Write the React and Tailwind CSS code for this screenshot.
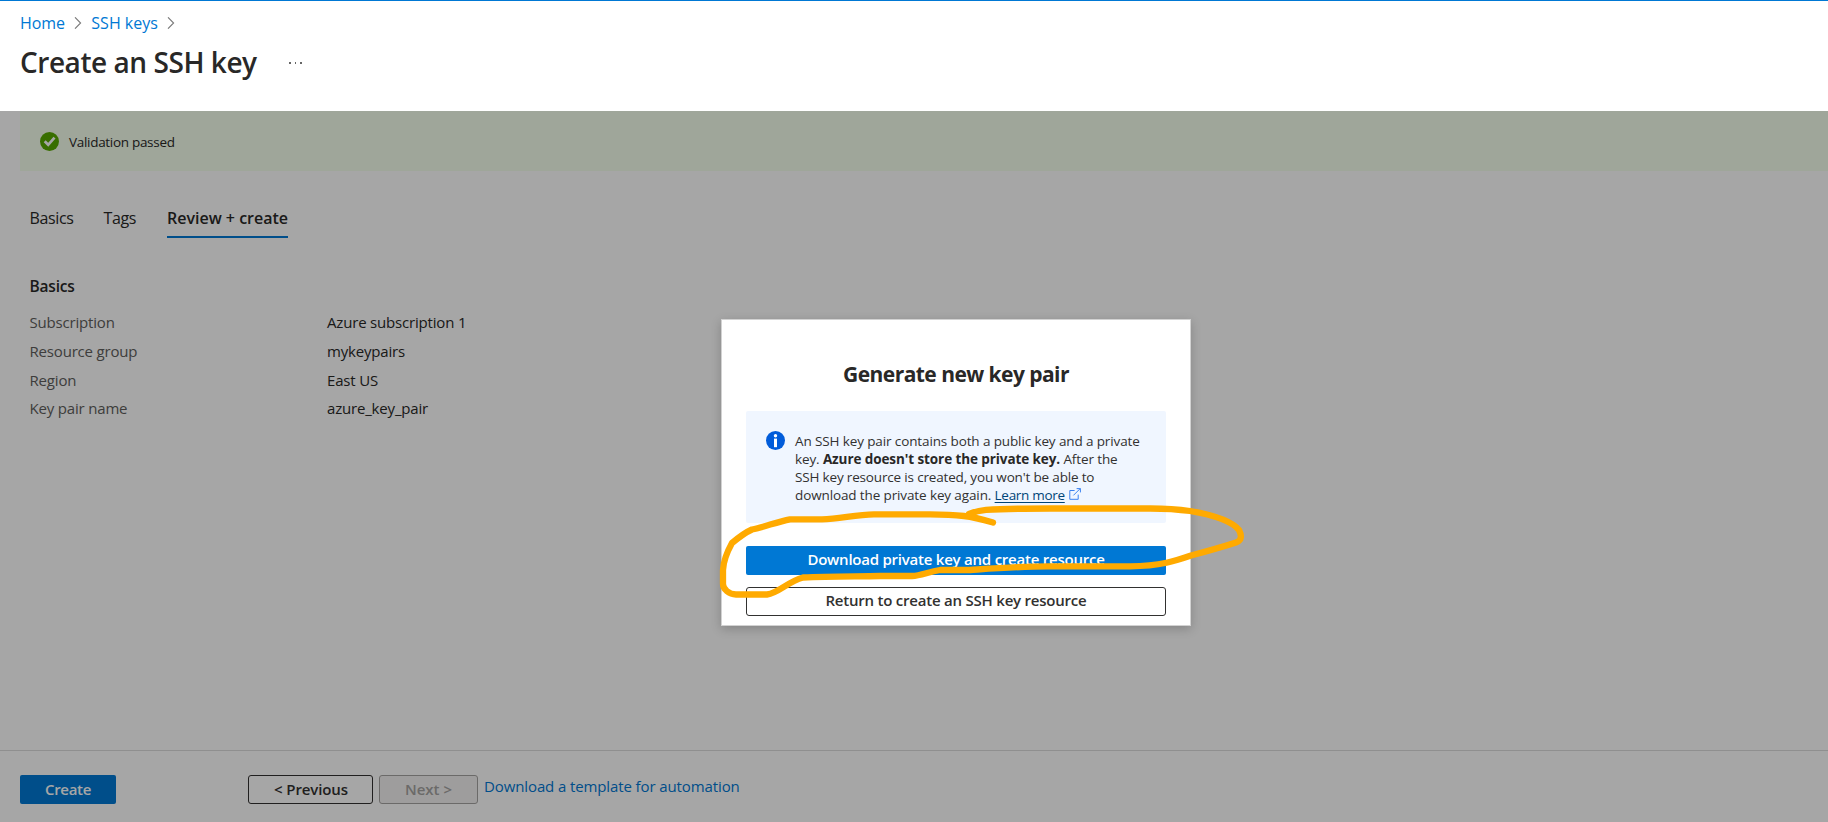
import React from 'react';

const details = [
  { label: 'Subscription', value: 'Azure subscription 1' },
  { label: 'Resource group', value: 'mykeypairs' },
  { label: 'Region', value: 'East US' },
  { label: 'Key pair name', value: 'azure_key_pair' },
];

function Chevron({ className }) {
  return (
    <svg viewBox="0 0 8 12" fill="none" stroke="#7a7a7a" strokeWidth="1.1" className={`h-3 w-2 ${className}`}>
      <path d="M1 0.3 6.6 6 1 11.7" />
    </svg>
  );
}

function CheckBadge() {
  return (
    <svg viewBox="0 0 19 19" className="size-[19px] shrink-0">
      <circle cx="9.5" cy="9.5" r="9.5" fill="#57aa00" />
      <path d="M4.7 9.3 8.2 12.8 14.5 5.6" fill="none" stroke="#fff" strokeWidth="2.7" />
    </svg>
  );
}

function InfoBadge() {
  return (
    <svg viewBox="0 0 19 19" className="mt-px size-[19px] shrink-0">
      <circle cx="9.5" cy="9.5" r="9.5" fill="#015cda" />
      <circle cx="9.5" cy="4.8" r="1.7" fill="#fff" />
      <rect x="8" y="7.6" width="3" height="8.6" fill="#fff" />
    </svg>
  );
}

function ExternalLink() {
  return (
    <svg viewBox="0 0 12 12" fill="none" stroke="#3b82f0" className="ml-1 inline-block size-3 align-[0px]">
      <path d="M5.6 2.5H.8V11.3H9.2V6.6M4.4 7.4 11.2.6M7.6.6H11.4V4.4" />
    </svg>
  );
}

function Header() {
  return (
    <header className="h-[111px] border-t border-[#0078d4] bg-white px-5 pt-3">
      <nav className="flex h-5 items-center text-[16px] leading-5 text-[#0078d4]">
        <a className="tracking-[-0.1px]">Home</a>
        <Chevron className="ml-[9.5px]" />
        <a className="ml-[9px]">SSH keys</a>
        <Chevron className="ml-[9.5px]" />
      </nav>
      <div className="mt-[9px] flex h-10 items-center">
        <h1 className="w-[269px] text-[28px] leading-10 font-semibold tracking-[-0.45px] text-[#292827]">Create an SSH key</h1>
        <div className="mt-[2px] flex gap-[4px]">
          <i className="size-[1.5px] bg-[#666]" />
          <i className="size-[1.5px] bg-[#666]" />
          <i className="size-[1.5px] bg-[#666]" />
        </div>
      </div>
    </header>
  );
}

function Content() {
  return (
    <main className="h-[639px]">
      <div className="ml-5 flex h-[60px] items-center gap-[10px] bg-[#f5ffed] pl-5">
        <CheckBadge />
        <span className="mt-px text-[13.5px] leading-5 tracking-[-0.3px]">Validation passed</span>
      </div>
      <div className="px-[29.5px]">
        <div className="mt-9 flex h-[31px] gap-[30px] text-[16px] leading-[22px]">
          <span className="w-[44px] tracking-[-0.36px]">Basics</span>
          <span className="w-[33.5px] tracking-[-0.4px]">Tags</span>
          <span className="w-[121px] border-b-2 border-[#0078d4] font-semibold whitespace-nowrap">Review + create</span>
        </div>
        <h2 className="mt-[38px] text-[15.5px] leading-5 font-semibold tracking-[-0.2px]">Basics</h2>
        <dl className="mt-[12px] text-[15px] leading-[28.75px] tracking-[-0.18px]">
          {details.map((d) => (
            <div key={d.label} className="flex">
              <dt className="w-[297.5px] text-[#605e5c]">{d.label}</dt>
              <dd>{d.value}</dd>
            </div>
          ))}
        </dl>
      </div>
    </main>
  );
}

function Footer() {
  return (
    <footer className="flex h-[72px] items-start border-t border-[#dcdcdc] px-5 pt-6 text-[15px] leading-[27px]">
      <button className="h-[29px] w-24 rounded-xs bg-[#0078d4] font-semibold tracking-[-0.3px] text-white">Create</button>
      <button className="ml-[132px] h-[29px] w-[125px] rounded-[3px] border border-[#323130] pl-px font-semibold tracking-[-0.1px] text-[#323130]">&lt; Previous</button>
      <button className="ml-1.5 h-[29px] w-[99px] rounded-[3px] border border-[#a5a3a1] bg-[#f3f2f1] font-semibold text-[#a5a3a1]">Next &gt;</button>
      <a className="ml-1.5 -mt-px leading-[25px] tracking-[-0.11px] text-[#0078d4]">Download a template for automation</a>
    </footer>
  );
}

function KeyPairDialog() {
  return (
    <section className="flex h-[307px] w-[470px] flex-col border border-[#d2d2d2] bg-white px-6 shadow-[0_3px_10px_rgba(0,0,0,0.2)]">
      <h2 className="mt-[39px] text-center text-[21px] leading-[30px] font-bold tracking-[-0.55px] text-[#292827]">Generate new key pair</h2>
      <div className="mt-[22px] flex h-[112px] gap-[10px] rounded-xs bg-[#f0f6ff] pt-[19px] pl-5">
        <InfoBadge />
        <p className="mt-[2px] text-[13.5px] leading-[18px] tracking-[-0.12px] whitespace-nowrap text-[#323130]">
          An SSH key pair contains both a public key and a private<br />
          key. <b className="font-bold tracking-[-0.09px] text-[#292827]">Azure doesn't store the private key.</b> After the<br />
          <span className="tracking-[-0.17px]">SSH key resource is created, you won't be able to</span><br />
          download the private key again.{' '}
          <a className="tracking-[-0.3px] text-[#004578] underline underline-offset-2">Learn more</a>
          <ExternalLink />
        </p>
      </div>
      <button className="mt-[23px] h-[29px] shrink-0 rounded-xs bg-[#0078d4] pb-[2px] text-[15px] leading-[25px] font-semibold tracking-[-0.23px] text-white">Download private key and create resource</button>
      <button className="mt-3 h-[29px] shrink-0 rounded-[3px] border border-[#323130] pb-[2px] text-[15px] leading-[25px] font-semibold tracking-[-0.22px] text-[#323130]">Return to create an SSH key resource</button>
    </section>
  );
}

function Marker() {
  return (
    <svg viewBox="710 490 560 130" fill="none" stroke="#ffaa00" strokeWidth="6.3" strokeLinecap="round" strokeLinejoin="round" className="pointer-events-none absolute top-[490px] left-[710px] h-[130px] w-[560px]">
      <path d="M993 522.500C981 519 973 517 964 516C952 514.500 942 514.300 930 514.300H874C856 514.500 841 518.500 822 519.300H790C777 522 764 527 752 529.500C744 533 738 538 732 543C727 552 723.500 560 723 570V584C723 589 729 594.500 736 594.500H767C779 593 787 582 803 577.500C830 576 855 576.500 880 576H912C921 575.500 928 572 940 570H970C1000 568 1020 566.500 1048 566.300H1130C1162 566 1178 560 1191 555.500C1208 551 1222 547 1236 542.500C1243 540 1241 534 1239 530C1231 520 1210 514.500 1190 511C1176 509 1166 508.500 1150 508.500H1050C1020 508.500 1000 509 986 509.800C978 510.500 974 512 969 514" />
    </svg>
  );
}

export default function App() {
  return (
    <div className="relative h-[822px] w-[1828px] overflow-hidden bg-white font-['Open_Sans','Noto_Sans',sans-serif] text-[#292827]">
      <Header />
      <Content />
      <Footer />
      <div className="absolute inset-x-0 top-[111px] bottom-0 flex justify-center bg-black/35 pt-[208px] pl-[84px]">
        <KeyPairDialog />
      </div>
      <Marker />
    </div>
  );
}
